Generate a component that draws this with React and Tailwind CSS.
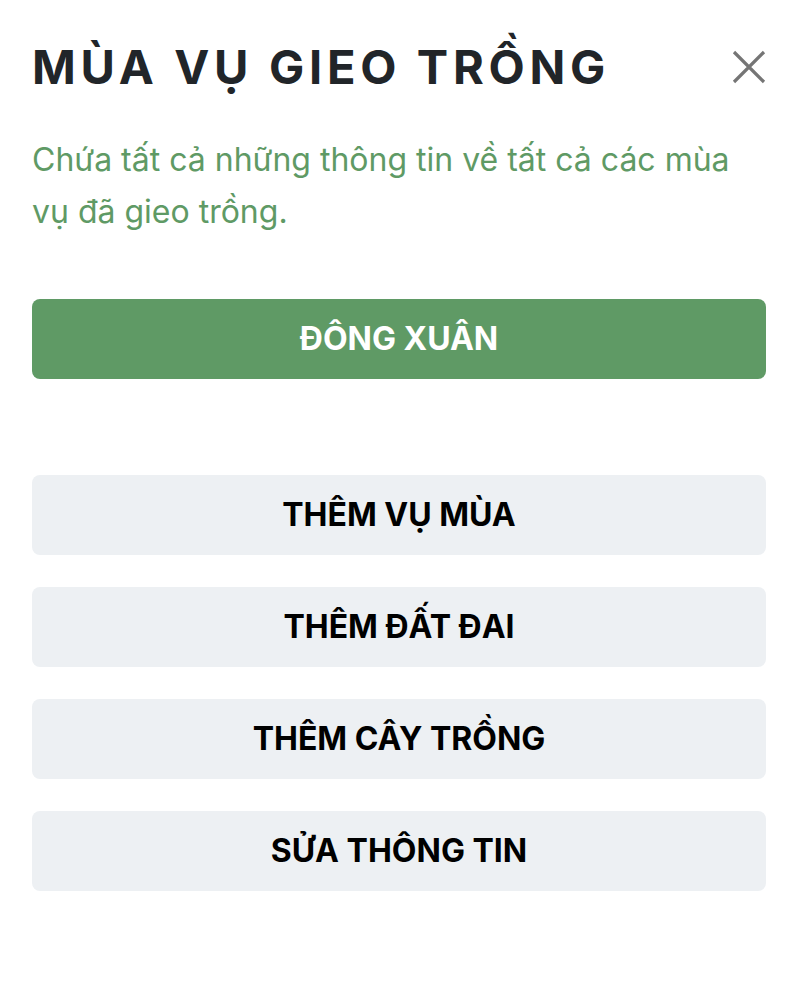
import React from 'react';

const actions = ['THÊM VỤ MÙA', 'THÊM ĐẤT ĐAI', 'THÊM CÂY TRỒNG', 'SỬA THÔNG TIN'];

export default function App() {
  return (
    <div className="min-h-[990px] bg-white pl-8 pr-[25px] pt-[36px] font-['Inter',sans-serif]">
      {/* Header */}
      <div className="flex items-center justify-between">
        <h1 className="text-[47px] leading-[62px] font-bold tracking-[0.1em] text-[#212529]">
          MÙA VỤ GIEO TRỒNG
        </h1>
        <button className="w-[34px] h-[34px] text-[#757575]">
          <svg viewBox="0 0 34 34" className="w-[34px] h-[34px]" fill="none" stroke="currentColor" strokeWidth="3.2">
            <path d="M2 2 L32 32 M32 2 L2 32" />
          </svg>
        </button>
      </div>

      {/* Description */}
      <p className="mt-[36px] text-[32px] leading-[52px] text-[#5f9a65]">
        Chứa tất cả những thông tin về tất cả các mùa vụ đã gieo trồng.
      </p>

      <button className="mt-[61px] w-full h-[80px] rounded-lg bg-[#5f9a65] text-white text-[32px] font-bold">
        ĐÔNG XUÂN
      </button>

      <div className="mt-[96px] flex flex-col gap-[32px]">
        {actions.map((label) => (
          <button
            key={label}
            className="w-full h-[80px] rounded-lg bg-[#edf0f3] text-black text-[32px] font-bold"
          >
            {label}
          </button>
        ))}
      </div>
    </div>
  );
}
